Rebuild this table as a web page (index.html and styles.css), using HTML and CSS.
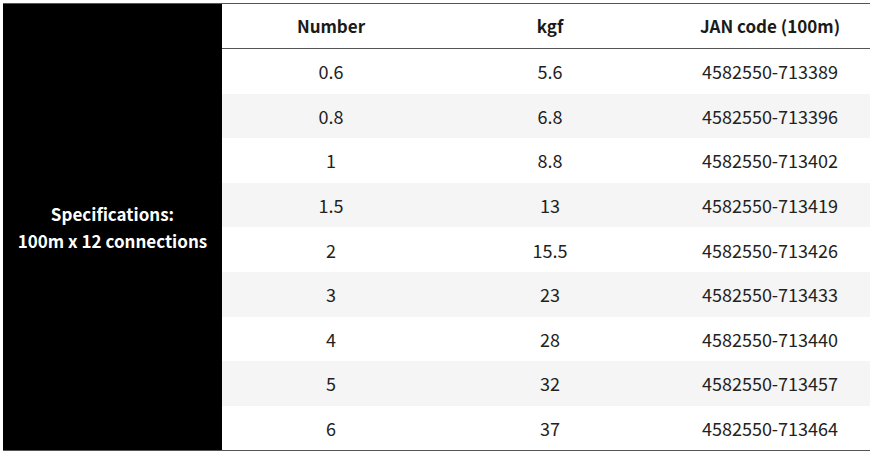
FILE: index.html
```html
<!DOCTYPE html>
<html>
<head>
<meta charset="utf-8">
<link rel="stylesheet" href="styles.css">
</head>
<body>
<table class="spec">
  <colgroup>
    <col class="c0"><col class="c1"><col class="c2"><col class="c3">
  </colgroup>
  <tbody>
    <tr class="head">
      <th class="side" rowspan="10">Specifications:<br>100m x 12 connections</th>
      <th>Number</th><th>kgf</th><th class="jan">JAN code (100m)</th>
    </tr>
    <tr><td>0.6</td><td>5.6</td><td class="jan">4582550-713389</td></tr>
    <tr class="alt"><td>0.8</td><td>6.8</td><td class="jan">4582550-713396</td></tr>
    <tr><td>1</td><td>8.8</td><td class="jan">4582550-713402</td></tr>
    <tr class="alt"><td>1.5</td><td>13</td><td class="jan">4582550-713419</td></tr>
    <tr><td>2</td><td>15.5</td><td class="jan">4582550-713426</td></tr>
    <tr class="alt"><td>3</td><td>23</td><td class="jan">4582550-713433</td></tr>
    <tr><td>4</td><td>28</td><td class="jan">4582550-713440</td></tr>
    <tr class="alt"><td>5</td><td>32</td><td class="jan">4582550-713457</td></tr>
    <tr><td>6</td><td>37</td><td class="jan">4582550-713464</td></tr>
  </tbody>
</table>
</body>
</html>
```
FILE: styles.css
```css
html, body {
  margin: 0;
  padding: 0;
  background: #fff;
  overflow: hidden;
}
body {
  padding: 3px 0 0 3px;
  font-family: "Noto Sans CJK JP", "Noto Sans", sans-serif;
  color: #222;
}
.spec {
  border-collapse: collapse;
  table-layout: fixed;
  width: 867px;
  border-top: 1px solid #555;
  border-bottom: 1px solid #555;
}
.c0 { width: 219px; }
.c1 { width: 218px; }
.c2 { width: 220px; }
.c3 { width: 210px; }
.spec th, .spec td {
  padding: 0;
  text-align: center;
  font-size: 18px;
  line-height: 22px;
}
.spec .head th {
  height: 44px;
  font-weight: 700;
  font-size: 17px;
  color: #1a1a1a;
  border-bottom: 1px solid #555;
}
.spec .head th.side {
  background: #000;
  color: #fff;
  border-bottom: none;
  line-height: 27px;
  font-size: 17px;
}
.spec td {
  height: 44.6px;
  font-weight: 400;
}
.spec tr.alt td {
  background: #f5f5f5;
}
.jan {
  padding-left: 10px !important;
}
```
